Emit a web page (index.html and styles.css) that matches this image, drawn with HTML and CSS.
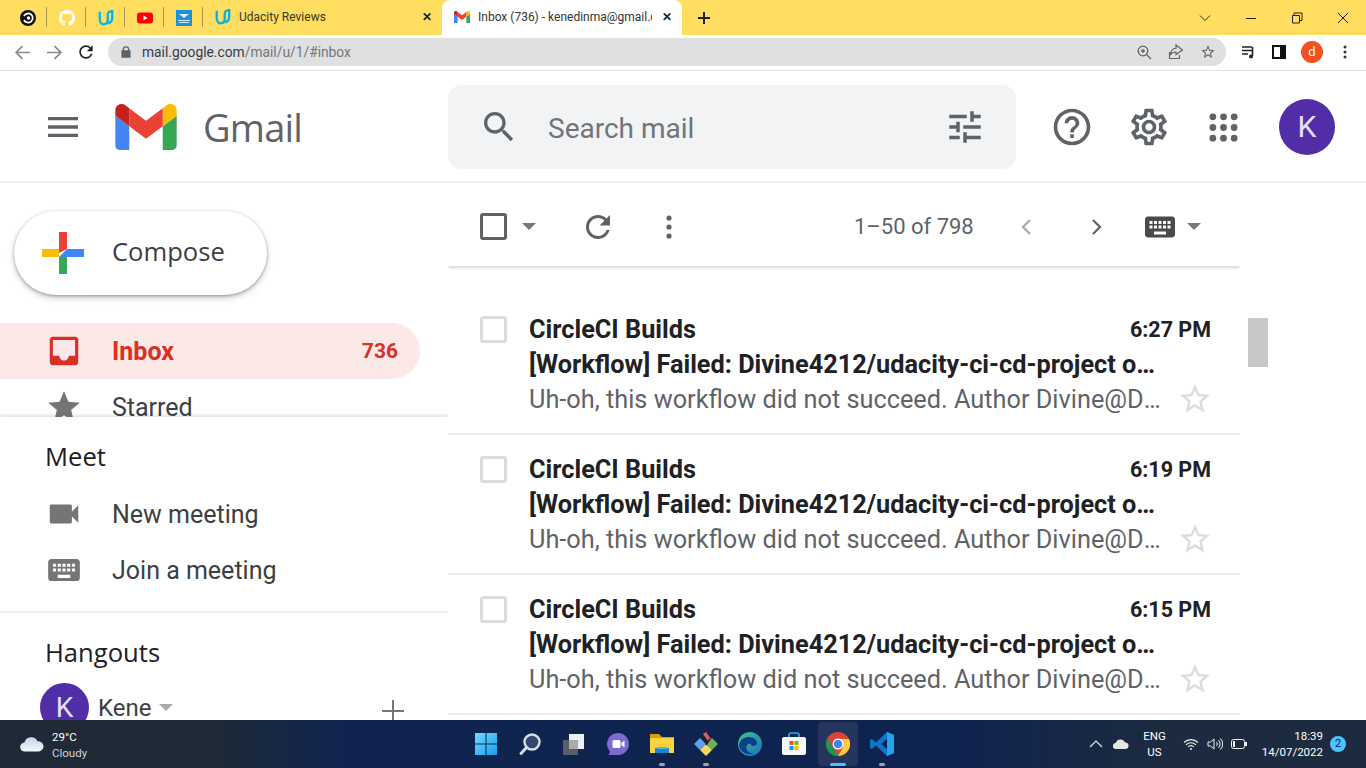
FILE: index.html
```html
<!DOCTYPE html>
<html lang="en">
<head>
  <meta charset="UTF-8">
  <title>Inbox (736) - Gmail</title>
  <link rel="stylesheet" href="styles.css">
</head>
<body>
  <svg class="defs" width="0" height="0">
    <symbol id="i-star" viewBox="0 0 24 24"><path d="M12 17.27L18.18 21l-1.64-7.03L22 9.24l-7.19-.61L12 2 9.19 8.63 2 9.24l5.46 4.73L5.82 21z"/></symbol>
    <symbol id="i-star-o" viewBox="0 0 24 24"><path d="M22 9.24l-7.19-.62L12 2 9.19 8.63 2 9.24l5.46 4.73L5.82 21 12 17.27 18.18 21l-1.63-7.03L22 9.24zM12 15.4l-3.76 2.27 1-4.28-3.32-2.88 4.38-.38L12 6.1l1.71 4.04 4.38.38-3.32 2.88 1 4.28L12 15.4z"/></symbol>
    <symbol id="i-keyboard" viewBox="0 0 24 24"><path d="M20 5H4c-1.1 0-1.99.9-1.99 2L2 17c0 1.1.9 2 2 2h16c1.1 0 2-.9 2-2V7c0-1.1-.9-2-2-2zm-9 3h2v2h-2V8zm0 3h2v2h-2v-2zM8 8h2v2H8V8zm0 3h2v2H8v-2zm-1 2H5v-2h2v2zm0-3H5V8h2v2zm9 7H8v-2h8v2zm0-4h-2v-2h2v2zm0-3h-2V8h2v2zm3 3h-2v-2h2v2zm0-3h-2V8h2v2z"/></symbol>
    <symbol id="i-gmail" viewBox="52 42 88 66">
      <path fill="#4285f4" d="M58 108h14V74L52 59v43c0 3.32 2.69 6 6 6"/>
      <path fill="#34a853" d="M120 108h14c3.32 0 6-2.69 6-6V59l-20 15"/>
      <path fill="#fbbc04" d="M120 48v26l20-15v-8c0-7.42-8.47-11.65-14.4-7.2"/>
      <path fill="#ea4335" d="M72 74V48l24 18 24-18v26L96 92"/>
      <path fill="#c5221f" d="M52 51v8l20 15V48l-5.6-4.2c-5.94-4.45-14.4-.22-14.4 7.2"/>
    </symbol>
    <symbol id="i-udacity" viewBox="0 0 18 18">
      <path fill="none" stroke="#02b3e4" stroke-width="2.6" d="M2 2v9c0 4 3 5.5 5.5 5 3-.6 3.5-3 3.5-5V5M11 5c0-1.5 1-2.5 1.5-2.8L16 1v8c0 3-1.500 5-4.500 6"/>
    </symbol>
  </svg>

  <div class="tabstrip">
    <div class="pinned">
      <svg class="favicon" viewBox="0 0 16 16"><circle cx="8" cy="8" r="8" fill="#111"/><path d="M4 6a4.6 4.600 0 110 4" fill="none" stroke="#fff" stroke-width="1.800"/><circle cx="8.500" cy="8" r="1.700" fill="#fff"/></svg>
    </div>
    <div class="pinned">
      <svg class="favicon" viewBox="0 0 16 16"><path fill="#fff" d="M8 0C3.58 0 0 3.58 0 8c0 3.54 2.29 6.53 5.47 7.59.4.07.55-.17.55-.38 0-.19-.01-.82-.01-1.49-2.01.37-2.53-.49-2.69-.94-.09-.23-.48-.94-.82-1.13-.28-.15-.68-.52-.01-.53.63-.01 1.08.58 1.23.82.72 1.21 1.87.87 2.33.66.07-.52.28-.87.51-1.07-1.78-.2-3.64-.89-3.64-3.95 0-.87.31-1.59.82-2.15-.08-.2-.36-1.02.08-2.12 0 0 .67-.21 2.2.82.64-.18 1.32-.27 2-.27.68 0 1.36.09 2 .27 1.53-1.04 2.2-.82 2.2-.82.44 1.1.16 1.92.08 2.12.51.56.82 1.27.82 2.15 0 3.07-1.87 3.75-3.65 3.95.29.25.54.73.54 1.48 0 1.07-.01 1.93-.01 2.2 0 .21.15.46.55.38A8.013 8.013 0 0016 8c0-4.42-3.58-8-8-8z"/></svg>
    </div>
    <div class="pinned"><svg class="favicon"><use href="#i-udacity"/></svg></div>
    <div class="pinned">
      <svg class="favicon" viewBox="0 0 16 16"><rect y="2.500" width="16" height="11" rx="3" fill="#f00"/><path d="M6.500 5.500l4 2.500-4 2.500z" fill="#fff"/></svg>
    </div>
    <div class="pinned">
      <svg class="favicon" viewBox="0 0 16 16"><rect width="16" height="16" fill="#1b8fd8"/><path d="M3 4h10L8 8zM2 10h12v1H2zM3 12h10v1H3z" fill="#d8eefb"/></svg>
    </div>
    <div class="tab">
      <svg class="favicon"><use href="#i-udacity"/></svg>
      <span class="tab-title">Udacity Reviews</span>
      <span class="tab-close">&#10005;</span>
    </div>
    <div class="tab tab-active">
      <svg class="favicon"><use href="#i-gmail"/></svg>
      <span class="tab-title">Inbox (736) - kenedinma@gmail.com</span>
      <span class="tab-close">&#10005;</span>
    </div>
    <div class="newtab">
      <svg viewBox="0 0 14 14" width="14" height="14"><path d="M6 1h2v5h5v2H8v5H6V8H1V6h5z" fill="#222"/></svg>
    </div>
    <div class="winctl">
      <svg viewBox="0 0 12 12" width="12" height="12"><path d="M1 3.500l5 5 5-5" fill="none" stroke="#333"/></svg>
      <svg viewBox="0 0 12 12" width="12" height="12"><path d="M1 6.500h10" stroke="#222"/></svg>
      <svg viewBox="0 0 12 12" width="12" height="12"><path d="M3 3V1h8v7.500H9M1.500 3.500h7V11h-7z" fill="none" stroke="#222"/></svg>
      <svg viewBox="0 0 12 12" width="12" height="12"><path d="M1 1l10 10M11 1L1 11" stroke="#222"/></svg>
    </div>
  </div>

  <div class="toolbar">
    <button class="tool tool-dim"><svg viewBox="0 0 16 16"><path d="M15 8H2.500M8 2L2 8l6 6" fill="none" stroke="currentColor" stroke-width="1.600"/></svg></button>
    <button class="tool tool-dim"><svg viewBox="0 0 16 16"><path d="M1 8h12.500M8 2l6 6-6 6" fill="none" stroke="currentColor" stroke-width="1.600"/></svg></button>
    <button class="tool"><svg viewBox="0 0 24 24"><path fill="currentColor" d="M17.650 6.350C16.200 4.900 14.210 4 12 4c-4.420 0-7.990 3.580-7.990 8s3.570 8 7.990 8c3.730 0 6.840-2.550 7.730-6h-2.080c-.82 2.330-3.040 4-5.650 4-3.310 0-6-2.690-6-6s2.690-6 6-6c1.660 0 3.140.69 4.220 1.780L13 11h7V4l-2.350 2.350z"/></svg></button>
    <div class="omnibox">
      <svg class="lock" viewBox="0 0 12 14" width="10" height="12"><path fill="#5f6368" d="M2 5V4a4 4 0 018 0v1h1.500v9H.5V5zm1.500 0h5V4a2.500 2.500 0 00-5 0z"/></svg>
      <span class="url">mail.google.com<span class="url-path">/mail/u/1/#inbox</span></span>
      <span class="omni-icons">
        <svg viewBox="0 0 16 16"><circle cx="7" cy="7" r="4.800" fill="none" stroke="#5f6368" stroke-width="1.300"/><path d="M10.500 10.500L15 15M5 7h4M7 5v4" stroke="#5f6368" stroke-width="1.300"/></svg>
        <svg viewBox="0 0 16 16"><path d="M8 1l6.500 5-6.500 4.500V8C5 8 3.500 9 2.500 11 2.500 7.500 4.500 4.500 8 4.200zM1.500 8v6.500h10V11" fill="none" stroke="#5f6368" stroke-width="1.200"/></svg>
        <svg viewBox="0 0 24 24"><use href="#i-star-o" fill="#5f6368"/></svg>
      </span>
    </div>
    <div class="ext-icons">
      <svg viewBox="0 0 16 16"><path d="M1 3h10M1 6.500h10M1 10h6M11.500 3v9" stroke="#222" stroke-width="1.600" fill="none"/><circle cx="10" cy="12.500" r="2" fill="#222"/></svg>
      <svg viewBox="0 0 16 16"><path d="M2 2h12v12H2z" fill="none" stroke="#111" stroke-width="2"/><path d="M9 2h5v12H9z" fill="#111"/></svg>
      <span class="profile">d</span>
      <svg viewBox="0 0 16 16"><circle cx="8" cy="3" r="1.500" fill="#333"/><circle cx="8" cy="8" r="1.500" fill="#333"/><circle cx="8" cy="13" r="1.500" fill="#333"/></svg>
    </div>
  </div>

  <div class="gmail">
    <header class="g-header">
      <button class="g-menu">
        <svg viewBox="0 0 24 24"><path d="M3 18h18v-2H3v2zm0-5h18v-2H3v2zm0-7v2h18V6H3z"/></svg>
      </button>
      <svg class="g-logo"><use href="#i-gmail"/></svg>
      <span class="g-word">Gmail</span>
      <div class="g-search">
        <svg class="g-search-icon" viewBox="0 0 24 24"><path d="M15.500 14h-.79l-.28-.27C15.410 12.590 16 11.110 16 9.500 16 5.910 13.090 3 9.500 3S3 5.910 3 9.500 5.910 16 9.500 16c1.610 0 3.090-.59 4.230-1.570l.27.28v.79l5 4.990L20.490 19l-4.990-5zm-6 0C7.010 14 5 11.990 5 9.500S7.010 5 9.500 5 14 7.010 14 9.500 11.990 14 9.500 14z"/></svg>
        <span class="g-search-text">Search mail</span>
        <svg class="g-tune" viewBox="0 0 24 24"><path d="M3 17v2h6v-2H3zM3 5v2h10V5H3zm10 16v-2h8v-2h-8v-2h-2v6h2zM7 9v2H3v2h4v2h2V9H7zm14 4v-2H11v2h10zm-6-4h2V7h4V5h-4V3h-2v6z"/></svg>
      </div>
      <div class="g-actions">
        <svg class="g-help" viewBox="0 0 24 24"><path d="M11 18h2v-2h-2v2zm1-16C6.480 2 2 6.480 2 12s4.480 10 10 10 10-4.480 10-10S17.520 2 12 2zm0 18c-4.410 0-8-3.590-8-8s3.590-8 8-8 8 3.590 8 8-3.590 8-8 8zm0-14c-2.210 0-4 1.790-4 4h2c0-1.100.9-2 2-2s2 .9 2 2c0 2-3 1.750-3 5h2c0-2.250 3-2.500 3-5 0-2.210-1.790-4-4-4z"/></svg>
        <svg class="g-gear" viewBox="0 0 24 24"><path d="M19.430 12.980c.04-.32.07-.64.07-.98 0-.34-.03-.66-.07-.98l2.110-1.650c.19-.15.24-.42.12-.64l-2-3.460c-.09-.16-.26-.25-.44-.25-.06 0-.12.01-.17.03l-2.490 1c-.52-.4-1.080-.73-1.690-.98l-.38-2.650C14.460 2.180 14.250 2 14 2h-4c-.25 0-.46.18-.49.42l-.38 2.650c-.61.25-1.170.59-1.690.98l-2.490-1c-.06-.02-.12-.03-.18-.03-.17 0-.34.09-.43.25l-2 3.460c-.13.22-.07.49.12.64l2.110 1.650c-.04.32-.07.65-.07.98 0 .33.03.66.07.98l-2.110 1.650c-.19.15-.24.42-.12.64l2 3.460c.09.16.26.25.44.25.06 0 .12-.01.17-.03l2.490-1c.52.4 1.080.73 1.690.98l.38 2.650c.03.24.24.42.49.42h4c.25 0 .46-.18.49-.42l.38-2.650c.61-.25 1.170-.59 1.690-.98l2.490 1c.06.02.12.03.18.03.17 0 .34-.09.43-.25l2-3.460c.12-.22.07-.49-.12-.64l-2.110-1.650zm-1.980-1.710c.04.31.05.52.05.73 0 .21-.02.43-.05.73l-.14 1.130.89.7 1.080.84-.7 1.210-1.270-.51-1.040-.42-.9.68c-.43.32-.84.56-1.250.73l-1.060.43-.16 1.130-.2 1.350h-1.400l-.19-1.350-.16-1.130-1.060-.43c-.43-.18-.83-.41-1.230-.71l-.91-.7-1.060.43-1.270.51-.7-1.210 1.080-.84.89-.7-.14-1.130c-.03-.31-.05-.54-.05-.74s.02-.43.05-.73l.14-1.130-.89-.7-1.080-.84.7-1.210 1.270.51 1.040.42.9-.68c.43-.32.84-.56 1.250-.73l1.060-.43.16-1.130.2-1.350h1.390l.19 1.350.16 1.130 1.060.43c.43.18.83.41 1.230.71l.91.7 1.060-.43 1.270-.51.7 1.210-1.070.85-.89.7.14 1.130zM12 8c-2.210 0-4 1.790-4 4s1.790 4 4 4 4-1.790 4-4-1.790-4-4-4zm0 6c-1.100 0-2-.9-2-2s.9-2 2-2 2 .9 2 2-.9 2-2 2z"/></svg>
        <svg class="g-apps" viewBox="0 0 30 30"><circle cx="4" cy="4" r="3.500"/><circle cx="15" cy="4" r="3.500"/><circle cx="26" cy="4" r="3.500"/><circle cx="4" cy="15" r="3.500"/><circle cx="15" cy="15" r="3.500"/><circle cx="26" cy="15" r="3.500"/><circle cx="4" cy="26" r="3.500"/><circle cx="15" cy="26" r="3.500"/><circle cx="26" cy="26" r="3.500"/></svg>
        <span class="g-avatar">K</span>
      </div>
    </header>

    <div class="g-body">
      <aside class="sidebar">
        <nav class="side-nav">
          <button class="compose">
            <svg viewBox="0 0 42 42" width="42" height="42">
              <path fill="#fbbc04" d="M0 17h17l0 8H0z"/>
              <path fill="#ea4335" d="M17 0h8v17l-8 4z"/>
              <path fill="#4285f4" d="M25 17h17v8H17z"/>
              <path fill="#34a853" d="M17 25h8v17h-8z"/>
            </svg>
            <span>Compose</span>
          </button>
          <div class="nav-item nav-active">
            <svg viewBox="0 0 24 24"><path d="M19 3H5c-1.100 0-2 .9-2 2v14c0 1.100.9 2 2 2h14c1.100 0 2-.9 2-2V5c0-1.100-.9-2-2-2zm0 12h-4c0 1.660-1.350 3-3 3s-3-1.340-3-3H5V5h14v10z"/></svg>
            <span class="nav-label">Inbox</span>
            <span class="nav-count">736</span>
          </div>
          <div class="nav-item">
            <svg><use href="#i-star"/></svg>
            <span class="nav-label">Starred</span>
          </div>
        </nav>
        <section class="meet">
          <h3 class="side-title">Meet</h3>
          <div class="nav-item">
            <svg viewBox="0 0 24 24"><path d="M17 10.500V7c0-.55-.45-1-1-1H4c-.55 0-1 .45-1 1v10c0 .55.45 1 1 1h12c.55 0 1-.45 1-1v-3.500l4 4v-11l-4 4z"/></svg>
            <span class="nav-label">New meeting</span>
          </div>
          <div class="nav-item">
            <svg><use href="#i-keyboard"/></svg>
            <span class="nav-label">Join a meeting</span>
          </div>
        </section>
        <section class="hangouts">
          <h3 class="side-title">Hangouts</h3>
          <div class="hang-user">
            <span class="hang-avatar">K</span>
            <span class="hang-name">Kene</span>
            <span class="caret"></span>
            <svg class="hang-plus" viewBox="0 0 22 22" width="22" height="22"><path d="M10 0h2v10h10v2H12v10h-2V12H0v-2h10z" fill="#757575"/></svg>
          </div>
        </section>
      </aside>

      <main class="mail">
        <div class="mail-col">
          <div class="mail-tools">
            <span class="check check-dark"></span>
            <span class="caret caret-check"></span>
            <svg class="tool-refresh" viewBox="0 0 24 24"><path d="M17.650 6.350C16.200 4.900 14.210 4 12 4c-4.420 0-7.990 3.580-7.990 8s3.570 8 7.990 8c3.730 0 6.840-2.550 7.730-6h-2.080c-.82 2.330-3.040 4-5.650 4-3.310 0-6-2.690-6-6s2.690-6 6-6c1.660 0 3.140.69 4.220 1.780L13 11h7V4l-2.350 2.350z"/></svg>
            <svg class="tool-more" viewBox="0 0 6 24"><circle cx="3" cy="3" r="2.600"/><circle cx="3" cy="12" r="2.600"/><circle cx="3" cy="21" r="2.600"/></svg>
            <span class="pager">1&ndash;50 of 798</span>
            <svg class="pager-prev" viewBox="0 0 12 18"><path d="M10 2L3 9l7 7" fill="none" stroke="#aaa" stroke-width="2.200"/></svg>
            <svg class="pager-next" viewBox="0 0 12 18"><path d="M2 2l7 7-7 7" fill="none" stroke="#5f6368" stroke-width="2.200"/></svg>
            <svg class="tool-keys"><use href="#i-keyboard"/></svg>
            <span class="caret caret-keys"></span>
          </div>

          <div class="mail-row">
            <span class="check"></span>
            <div class="row-body">
              <div class="row-top"><span class="sender">CircleCI Builds</span><span class="time">6:27 PM</span></div>
              <div class="subject">[Workflow] Failed: Divine4212/udacity-ci-cd-project on master</div>
              <div class="row-bottom">
                <span class="preview">Uh-oh, this workflow did not succeed. Author Divine@Divine-PC</span>
                <svg class="row-star"><use href="#i-star-o"/></svg>
              </div>
            </div>
          </div>
          <div class="mail-row">
            <span class="check"></span>
            <div class="row-body">
              <div class="row-top"><span class="sender">CircleCI Builds</span><span class="time">6:19 PM</span></div>
              <div class="subject">[Workflow] Failed: Divine4212/udacity-ci-cd-project on master</div>
              <div class="row-bottom">
                <span class="preview">Uh-oh, this workflow did not succeed. Author Divine@Divine-PC</span>
                <svg class="row-star"><use href="#i-star-o"/></svg>
              </div>
            </div>
          </div>
          <div class="mail-row">
            <span class="check"></span>
            <div class="row-body">
              <div class="row-top"><span class="sender">CircleCI Builds</span><span class="time">6:15 PM</span></div>
              <div class="subject">[Workflow] Failed: Divine4212/udacity-ci-cd-project on master</div>
              <div class="row-bottom">
                <span class="preview">Uh-oh, this workflow did not succeed. Author Divine@Divine-PC</span>
                <svg class="row-star"><use href="#i-star-o"/></svg>
              </div>
            </div>
          </div>
        </div>
        <div class="scroll-thumb"></div>
      </main>
    </div>
  </div>

  <footer class="taskbar">
    <div class="weather">
      <svg viewBox="0 0 24 16" width="24" height="16"><defs><linearGradient id="cl" x1="0" y1="0" x2="0" y2="1"><stop offset="0" stop-color="#c4d4f4"/><stop offset="1" stop-color="#f4f6fb"/></linearGradient></defs><path fill="url(#cl)" d="M5 15.500a4.500 4.500 0 01-.6-9A7 7 0 0117.500 5.200 5.200 5.200 0 0119 15.500z"/></svg>
      <div class="weather-text"><div>29&deg;C</div><div class="weather-sub">Cloudy</div></div>
    </div>
    <div class="apps">
      <span class="app">
        <svg viewBox="0 0 24 24"><defs><linearGradient id="st" x1="0" y1="0" x2="1" y2="1"><stop offset="0" stop-color="#6fdcff"/><stop offset="1" stop-color="#1a9cf0"/></linearGradient></defs><path fill="url(#st)" d="M1 1h10.500v10.500H1zM12.500 1H23v10.500H12.500zM1 12.500h10.500V23H1zM12.500 12.500H23V23H12.500z"/></svg>
      </span>
      <span class="app">
        <svg viewBox="0 0 24 24"><circle cx="14" cy="10" r="7.500" fill="#33476b" stroke="#d8dde6" stroke-width="2.400"/><path d="M8.500 15.500L3 21.500" stroke="#d8dde6" stroke-width="3" stroke-linecap="round"/></svg>
      </span>
      <span class="app">
        <svg viewBox="0 0 24 24"><rect x="7" y="2" width="15" height="15" fill="#eceff3"/><rect x="1" y="8" width="15" height="15" fill="#5b5e63"/><rect x="7" y="8" width="9" height="9" fill="#a9abae"/></svg>
      </span>
      <span class="app">
        <svg viewBox="0 0 24 24"><path fill="#7b6bd0" d="M12 1a11 11 0 110 22H2.500l1.500-3.500A11 11 0 0112 1z"/><rect x="6.500" y="8" width="8" height="8" rx="1.500" fill="#fff"/><path d="M15.500 11l3-2.500v7l-3-2.500z" fill="#fff"/></svg>
      </span>
      <span class="app app-open">
        <svg viewBox="0 0 24 24"><path fill="#d99c0b" d="M0 2h9l3 3h12v6H0z"/><path fill="#fdd23e" d="M0 6h24v15H0z"/><path fill="#1a84cf" d="M5 16h14v5H5z"/><path fill="#52b5ec" d="M7 15h10v2H7z"/></svg>
      </span>
      <span class="app app-open">
        <svg viewBox="0 0 24 24"><path fill="#5fa0ee" d="M0 12l6-6 6 6-6 6z"/><path fill="#e95a5a" d="M9 2l3-2 5 7-3 2z"/><path fill="#6cb25a" d="M12 12l6-6 6 6-6 6z"/><path fill="#f6d860" d="M6 18l6-6 6 6-6 6z"/><path d="M8 4l5 9M16 7l-4 6" stroke="#222" stroke-width="1.500"/></svg>
      </span>
      <span class="app">
        <svg viewBox="0 0 24 24"><defs><linearGradient id="ed" x1="0" y1="0" x2="1" y2="1"><stop offset="0" stop-color="#3ec78a"/><stop offset="1" stop-color="#1a6fc4"/></linearGradient></defs><circle cx="12" cy="12" r="12" fill="url(#ed)"/><path fill="#0c3f8a" d="M1 13c1-6 6-8 10-8 5 0 8 3 8 6 0 2-2 3-4 3-2 0-2-1-2-2-3-1-6 2-4 6 1 2 4 4 8 3-7 3-15 0-16-8z"/></svg>
      </span>
      <span class="app">
        <svg viewBox="0 0 24 24"><path d="M7 6V3a2 2 0 012-2h6a2 2 0 012 2v3" fill="none" stroke="#2ab0ee" stroke-width="1.600"/><rect y="5" width="24" height="18" rx="2" fill="#f7f7f7"/><path fill="#f25022" d="M7.500 9h4v4h-4z"/><path fill="#7fba00" d="M12.500 9h4v4h-4z"/><path fill="#00a4ef" d="M7.500 14h4v4h-4z"/><path fill="#ffb900" d="M12.500 14h4v4h-4z"/></svg>
      </span>
      <span class="app app-active">
        <svg viewBox="0 0 24 24"><circle cx="12" cy="12" r="12" fill="#db4437"/><path fill="#0f9d58" d="M1.600 6.500l5.400 9.200 5 8.300A12 12 0 010 12c0-2 .6-4 1.600-5.500z"/><path fill="#ffcd40" d="M12 7h11a12 12 0 01-11 17l5.200-9z"/><circle cx="12" cy="12" r="5.500" fill="#fff"/><circle cx="12" cy="12" r="4.300" fill="#4285f4"/></svg>
      </span>
      <span class="app app-open">
        <svg viewBox="0 0 24 24"><path fill="#0a78c8" d="M17 0l7 3v18l-7 3-11-10.500L1.500 17 0 16V8l1.500-1L6 10.500zM17 7l-6 5 6 5z"/><path fill="#2aa1ee" d="M17 0l7 3v18l-7 3z"/></svg>
      </span>
    </div>
    <div class="tray">
      <svg viewBox="0 0 14 8" width="14" height="8"><path d="M1 7l6-6 6 6" fill="none" stroke="#e8e8e8" stroke-width="1.200"/></svg>
      <svg viewBox="0 0 16 10" width="16" height="10"><path fill="#e6e6e6" d="M3 10a3 3 0 01-.3-6A5 5 0 0112 3.500 3.300 3.300 0 0113 10z"/></svg>
      <div class="lang"><div>ENG</div><div>US</div></div>
      <svg viewBox="0 0 16 12" width="16" height="12"><path d="M1 4.500a10 10 0 0114 0M3 6.800a7 7 0 0110 0M5 9a4 4 0 016 0" fill="none" stroke="#f2f2f2" stroke-width="1.100"/><circle cx="8" cy="11" r="1" fill="#f2f2f2"/></svg>
      <svg viewBox="0 0 16 14" width="16" height="14"><path d="M1 5h2.500L7 2v10L3.500 9H1zM9.500 5a3 3 0 010 4M11.500 3a6 6 0 010 8M13.500 1.500a8 8 0 010 11" fill="none" stroke="#f2f2f2"/></svg>
      <svg viewBox="0 0 16 10" width="16" height="10"><rect x=".5" y=".5" width="13" height="9" rx="2" fill="none" stroke="#f2f2f2"/><rect x="2" y="2" width="2" height="6" fill="#f2f2f2"/><rect x="14" y="3" width="2" height="4" fill="#f2f2f2"/></svg>
      <div class="clock"><div>18:39</div><div>14/07/2022</div></div>
      <span class="notif">2</span>
    </div>
  </footer>
</body>
</html>
```

FILE: styles.css
```css
* { box-sizing: border-box; }
html, body { margin: 0; height: 768px; overflow: hidden; }
body { font-family: Roboto, "Liberation Sans", sans-serif; background: #fff; color: #202124; display: flex; flex-direction: column; }
button { border: 0; background: none; padding: 0; font: inherit; color: inherit; }
svg { display: block; flex: none; }
.defs { position: absolute; }

/* browser tabs */
.tabstrip { height: 35px; background: #ffdd5e; display: flex; align-items: center; padding-left: 8px; }
.pinned { width: 39px; height: 35px; display: flex; align-items: center; justify-content: center; position: relative; }
.pinned::after { content: ""; position: absolute; right: 0; top: 7px; height: 20px; width: 1px; background: #a89545; }
.favicon { width: 16px; height: 16px; }
.tab { width: 239px; height: 35px; display: flex; align-items: center; padding: 0 0 1px 12px; font-size: 12px; color: #3c3a20; }
.tab-title { flex: 1; min-width: 0; margin-left: 8px; white-space: nowrap; overflow: hidden; }
.tab-close { width: 30px; font-size: 12px; font-weight: 700; text-align: center; color: #222; }
.tab-active { width: 240px; background: #fff; border-radius: 8px 8px 0 0; color: #333; }
.newtab { width: 44px; display: flex; justify-content: center; }
.winctl { margin-left: auto; display: flex; gap: 34px; padding-right: 17px; }

/* browser toolbar */
.toolbar { height: 36px; display: flex; align-items: center; padding: 3px 0 4px 14px; border-bottom: 1px solid #e4e4e4; }
.tool { width: 32px; height: 20px; display: flex; align-items: center; color: #222; }
.tool svg { width: 17px; height: 17px; }
.tool:nth-child(3) svg { width: 20px; height: 20px; margin-left: -2px; }
.tool-dim { color: #8a8a8a; }
.omnibox { width: 1118px; height: 28px; margin-left: -2px; border-radius: 14px; background: #e0e0e0; display: flex; align-items: center; padding-left: 13px; font-size: 13.8px; }
.url { margin-left: 11px; color: #333c46; }
.url-path { color: #70757a; }
.omni-icons { margin-left: auto; display: flex; gap: 16px; padding-right: 10px; }
.omni-icons svg { width: 16px; height: 16px; }
.ext-icons { flex: 1; display: flex; align-items: center; justify-content: space-between; padding: 0 13px 0 15px; }
.ext-icons svg { width: 16px; height: 16px; }
.profile { width: 22px; height: 22px; border-radius: 50%; background: #f4511e; color: #fff; font-size: 13px; text-align: center; line-height: 22px; }

/* gmail frame */
.gmail { height: 649px; overflow: hidden; }
.g-header { height: 112px; padding-top: 2px; border-bottom: 2px solid #eef0f3; display: flex; align-items: center; color: #5f6368; }
.g-header svg { fill: #5f6368; }
.g-menu { margin-left: 43px; width: 40px; }
.g-menu svg { width: 40px; height: 40px; }
.g-logo { width: 62px; height: 46px; margin-left: 32px; }
.g-word { margin-left: 26px; width: 245px; font-family: "Open Sans", sans-serif; font-size: 38px; letter-spacing: -.8px; color: #5f6368; }
.g-search { width: 568px; height: 84px; border-radius: 14px; background: #f1f3f4; display: flex; align-items: center; padding: 0 30px 0 31px; }
.g-search-icon { width: 40px; height: 40px; }
.g-search-text { margin: 2px 0 0 29px; flex: 1; font-size: 28px; color: #70757a; }
.g-tune { width: 42px; height: 42px; }
.g-actions { display: flex; align-items: center; margin-left: 34px; }
.g-help { width: 44px; height: 44px; }
.g-gear { width: 44px; height: 44px; margin-left: 33px; }
.g-apps { width: 29px; height: 29px; margin-left: 38px; }
.g-avatar { width: 56px; height: 56px; margin-left: 41px; border-radius: 50%; background: #512da8; color: #e6e0f5; font-size: 30px; text-align: center; line-height: 56px; }

.g-body { display: flex; height: 537px; }

/* sidebar */
.sidebar { width: 448px; flex: none; }
.side-nav { height: 234px; overflow: hidden; }
.compose { margin: 28px 0 28px 14px; width: 253px; height: 84px; border-radius: 42px; background: #fff; box-shadow: 0 1px 3px rgba(60,64,67,.4), 0 3px 6px rgba(60,64,67,.25); display: flex; align-items: center; padding-left: 28px; font-family: "Open Sans", sans-serif; font-size: 25.6px; color: #3c4043; }
.compose span { margin: 0 0 4px 28px; }
.nav-item { height: 56px; display: flex; align-items: center; padding-left: 45px; font-size: 25px; color: #3c4043; }
.nav-item svg { width: 38px; height: 38px; fill: #757575; }
.nav-label { margin-left: 29px; }
.nav-active { width: 420px; background: #fce8e6; border-radius: 0 28px 28px 0; color: #d93025; font-weight: 700; }
.nav-active svg { fill: #d93025; }
.nav-count { margin-left: auto; padding-right: 22px; font-size: 21px; }
.meet { height: 196px; padding-top: 20px; box-shadow: 0 -2px 3px rgba(60,64,67,.15); clip-path: inset(-6px 0 0 0); background: #fff; position: relative; border-bottom: 2px solid #eee; }
.side-title { margin: 0 0 9px 45px; height: 40px; line-height: 40px; font-family: "Open Sans", sans-serif; font-size: 25.6px; font-weight: 400; color: #202124; }
.hangouts { padding-top: 20px; }
.hangouts .side-title { margin-bottom: 10px; }
.hang-user { display: flex; align-items: center; padding-left: 40px; }
.hang-avatar { width: 49px; height: 49px; border-radius: 50%; background: #512da8; color: #e6e0f5; font-size: 28px; text-align: center; line-height: 49px; }
.hang-name { margin-left: 9px; font-size: 24px; color: #3c4043; }
.hang-plus { margin-left: 209px; margin-top: 6px; }
.caret { display: block; width: 0; height: 0; border: 7px solid transparent; border-top: 7px solid #777; border-bottom: 0; }
.hang-user .caret { margin-left: 8px; border-top-color: #aaa; }

/* mail list */
.mail { flex: 1; display: flex; }
.mail-col { width: 792px; flex: none; }
.mail-tools { height: 83px; display: flex; align-items: center; padding: 4px 0 0 32px; box-shadow: 0 2px 3px rgba(60,64,67,.2); clip-path: inset(0 0 -6px 0); margin-bottom: 29px; position: relative; }
.check { display: block; width: 27px; height: 27px; flex: none; border: 3px solid #dadce0; border-radius: 3px; }
.mail-row .check { margin-top: 4px; }
.check-dark { border-color: #5f6368; }
.mail-tools svg { fill: #5f6368; }
.caret-check { margin-left: 15px; }
.tool-refresh { width: 36px; height: 36px; margin-left: 44px; }
.tool-more { width: 6px; height: 24px; margin-left: 50px; }
.pager { margin-left: 182px; width: 118px; font-size: 22px; color: #5f6368; white-space: nowrap; }
.pager-prev { width: 12px; height: 18px; margin-left: 48px; }
.pager-next { width: 12px; height: 18px; margin-left: 59px; }
.mail-tools .tool-keys { width: 36px; height: 36px; margin-left: 39px; fill: #4a4a4a; }
.caret-keys { margin-left: 9px; }
.mail-row { height: 140px; display: flex; padding: 17px 29px 0 32px; border-bottom: 2px solid #eee; }
.row-body { flex: 1; min-width: 0; margin-left: 22px; font-size: 25.3px; line-height: 35px; }
.row-top { display: flex; justify-content: space-between; font-weight: 700; color: #202124; }
.time { font-size: 21.5px; }
.subject { font-weight: 700; width: 632px; white-space: nowrap; overflow: hidden; text-overflow: ellipsis; }
.row-bottom { display: flex; align-items: center; justify-content: space-between; margin-top: -1px; }
.preview { width: 632px; color: #5f6368; white-space: nowrap; overflow: hidden; text-overflow: ellipsis; }
.row-star { width: 36px; height: 36px; fill: #dadce0; margin-right: -2px; }
.scroll-thumb { width: 20px; height: 49px; margin: 135px 0 0 8px; background: #c8c8c8; }

/* windows taskbar */
.taskbar { height: 48px; flex: none; display: grid; grid-template-columns: 1fr auto 1fr; align-items: center; color: #fff; background: linear-gradient(90deg, #1f2a36 0, #1f2a36 15%, #10244f 25%, #0f2350 70%, #1c2b3f 85%, #1c2b3f 100%); font-size: 11.5px; }
.weather { display: flex; align-items: center; padding-left: 20px; gap: 8px; }
.weather-text { line-height: 16px; padding-top: 2px; }
.weather-sub { color: #cfd3d8; }
.apps { display: flex; padding-left: 2px; }
.app { width: 44px; height: 44px; display: flex; align-items: center; justify-content: center; position: relative; }
.app svg { width: 24px; height: 24px; }
.app-open::after { content: ""; position: absolute; bottom: 0; left: 19px; width: 6px; height: 3px; border-radius: 2px; background: #9aa3b2; }
.app-active { background: #26355c; border-radius: 4px; width: 40px; margin: 0 2px; }
.app-active::after { content: ""; position: absolute; bottom: 0; left: 12px; width: 16px; height: 3px; border-radius: 2px; background: #4cc2ff; }
.tray { display: flex; align-items: center; justify-content: flex-end; padding-right: 43px; position: relative; }
.tray svg:nth-child(2) { margin-left: 10px; }
.lang { margin: 0 17px 0 14px; text-align: center; line-height: 16px; }
.tray svg:nth-child(4), .tray svg:nth-child(5) { margin-right: 8px; }
.clock { margin-left: 15px; text-align: right; line-height: 16px; }
.notif { position: absolute; right: 20px; width: 16px; height: 16px; border-radius: 50%; background: #4cc2ff; color: #0f2350; font-size: 11px; text-align: center; line-height: 16px; }
```
